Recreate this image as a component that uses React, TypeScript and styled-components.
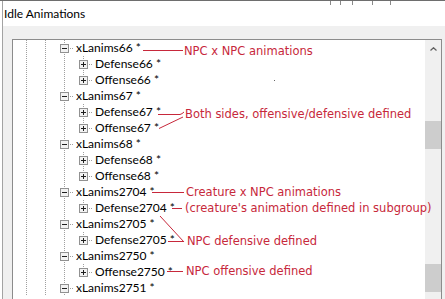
import React from 'react';
import styled, { createGlobalStyle } from 'styled-components';

const GlobalStyle = createGlobalStyle`
  html, body {
    margin: 0;
    padding: 0;
    background: #fff;
  }
  body {
    font-family: Lato, "Liberation Sans", sans-serif;
  }
`;

const Window = styled.div`
  position: relative;
  width: 445px;
  height: 299px;
  box-sizing: border-box;
  overflow: hidden;
  background: #fff;
  border-top: 1px solid #6e6e6e;
`;

const Frame = styled.div`
  height: 100%;
  margin-left: 2px;
  border-left: 1px solid #a3a3a3;
  display: flex;
  flex-direction: column;
`;

const TitleBar = styled.div`
  flex: none;
  height: 25px;
  padding-left: 1px;
  display: flex;
  align-items: center;
  font: 12px Lato, "Liberation Sans", sans-serif;
  color: #000;
  background: #fff;
`;

const Body = styled.div`
  flex: 1;
  min-height: 0;
  display: flex;
  padding: 13px 3px 0 9px;
  background: #f0f0f0;
`;

const TreeBox = styled.div`
  flex: 1;
  display: flex;
  overflow: hidden;
  border: 1px solid #8c8c8c;
  border-bottom: none;
  background: #fff;
`;

const TreeList = styled.div`
  flex: 1;
  display: flex;
  flex-direction: column;
  padding-left: 4px;
`;

const Row = styled.div`
  flex: none;
  height: 16px;
  display: flex;
`;

const DOTS_V = 'repeating-linear-gradient(to bottom, #a0a0a0 0 1px, transparent 1px 2px)';
const DOTS_H = 'repeating-linear-gradient(to right, #a0a0a0 0 1px, transparent 1px 2px)';

// tree guide lines drawn as dotted backgrounds of a 19px indent cell
const Cell = styled.span<{ $up?: boolean; $down?: boolean; $across?: boolean }>`
  flex: none;
  width: 19px;
  height: 16px;
  box-sizing: border-box;
  padding: 4px 0 0 5px;
  background: ${(p) => {
    const layers: string[] = [];
    if (p.$up && p.$down) layers.push(`${DOTS_V} 9px 0 / 1px 16px no-repeat`);
    else if (p.$up) layers.push(`${DOTS_V} 9px 0 / 1px 9px no-repeat`);
    else if (p.$down) layers.push(`${DOTS_V} 9px 8px / 1px 8px no-repeat`);
    if (p.$across) layers.push(`${DOTS_H} 9px 8px / 10px 1px no-repeat`);
    return layers.length ? layers.join(', ') : 'none';
  }};

  svg {
    display: block;
  }
`;

const Label = styled.span`
  margin-left: 2px;
  font: 12px/16px Lato, "Liberation Sans", sans-serif;
  color: #000;
  white-space: nowrap;
`;

const ScrollBar = styled.div`
  flex: none;
  width: 16px;
  display: flex;
  flex-direction: column;
  background: #f0f0f0;
`;

const ArrowButton = styled.div`
  flex: none;
  height: 17px;
  display: flex;
  align-items: center;
  justify-content: center;
`;

const Thumb = styled.div<{ $gap: number }>`
  flex: none;
  height: 28px;
  margin-top: ${(p) => p.$gap}px;
  background: #cdcdcd;
`;

const Notes = styled.div`
  position: absolute;
  inset: 0;
  pointer-events: none;
`;

const Note = styled.span<{ $x: number; $y: number }>`
  position: absolute;
  left: ${(p) => p.$x}px;
  top: ${(p) => p.$y}px;
  font: 11.5px/14px "DejaVu Sans", Verdana, sans-serif;
  color: #c7283b;
  white-space: nowrap;
`;

const Strokes = styled.svg`
  position: absolute;
  inset: 0;
`;

type Node = { depth: 0 | 1; label: string; open?: boolean; last?: boolean };

const rows: Node[] = [
  { depth: 0, label: 'xLanims66 *', open: true },
  { depth: 1, label: 'Defense66 *' },
  { depth: 1, label: 'Offense66 *', last: true },
  { depth: 0, label: 'xLanims67 *', open: true },
  { depth: 1, label: 'Defense67 *' },
  { depth: 1, label: 'Offense67 *', last: true },
  { depth: 0, label: 'xLanims68 *', open: true },
  { depth: 1, label: 'Defense68 *' },
  { depth: 1, label: 'Offense68 *', last: true },
  { depth: 0, label: 'xLanims2704 *', open: true },
  { depth: 1, label: 'Defense2704 *', last: true },
  { depth: 0, label: 'xLanims2705 *', open: true },
  { depth: 1, label: 'Defense2705 *', last: true },
  { depth: 0, label: 'xLanims2750 *', open: true },
  { depth: 1, label: 'Offense2750 *', last: true },
  { depth: 0, label: 'xLanims2751 *', open: true },
];

const notes = [
  { x: 184, y: 43, text: 'NPC x NPC animations' },
  { x: 185, y: 106, text: 'Both sides, offensive/defensive defined' },
  { x: 186, y: 184, text: 'Creature x NPC animations' },
  { x: 185, y: 200, text: "(creature's animation defined in subgroup)" },
  { x: 187, y: 233, text: 'NPC defensive defined' },
  { x: 186, y: 263, text: 'NPC offensive defined' },
];

function Expander({ open }: { open?: boolean }) {
  return (
    <svg width="9" height="9" viewBox="0 0 9 9">
      <rect x="0.5" y="0.5" width="8" height="8" fill="#f2f2f2" stroke="#919191" />
      <path d="M2 4.5h5" stroke="#1e1e1e" />
      {!open && <path d="M4.5 2v5" stroke="#1e1e1e" />}
    </svg>
  );
}

function TreeRow({ node }: { node: Node }) {
  return (
    <Row>
      <Cell $up $down />
      <Cell $up $down />
      {node.depth === 1 && <Cell $up $down />}
      <Cell $up $down={node.depth === 0 || !node.last} $across>
        <Expander open={node.depth === 0 ? node.open : false} />
      </Cell>
      <Label>{node.label}</Label>
    </Row>
  );
}

export default function App() {
  return (
    <>
      <GlobalStyle />
      <Window>
        <Frame>
          <TitleBar>Idle Animations</TitleBar>
          <Body>
            <TreeBox>
              <TreeList>
                {rows.map((n) => (
                  <TreeRow key={n.label} node={n} />
                ))}
              </TreeList>
              <ScrollBar>
                <ArrowButton>
                  <svg width="7" height="4" viewBox="0 0 7 4">
                    <path d="M0.5 3.5L3.5 0.7L6.5 3.5" fill="none" stroke="#606060" strokeWidth="1.2" />
                  </svg>
                </ArrowButton>
                <Thumb $gap={64} />
                <Thumb $gap={115} />
              </ScrollBar>
            </TreeBox>
          </Body>
        </Frame>

        <Notes>
          <Strokes width="445" height="299" viewBox="0 0 445 299">
            <g stroke="#c7283b" strokeWidth="1" fill="none">
              <path d="M143 49.5H183" />
              <path d="M158 113.5H180Q182 113 184 111" />
              <path d="M159 127.5L183 116" />
              <path d="M152 191.5H184" />
              <path d="M172 207.5H182" />
              <path d="M160 215L184 241" />
              <path d="M168 240.5H184" />
              <path d="M167 270.5H183" />
            </g>
            <g stroke="#8a8a8a" strokeWidth="1">
              <path d="M330.5 0V4M340.5 0V4M352.5 0V4M372.5 0V4M390.5 0V4" />
            </g>
            <rect x="274" y="79" width="1" height="1" fill="#666" />
          </Strokes>
          {notes.map((n) => (
            <Note key={n.text} $x={n.x} $y={n.y}>
              {n.text}
            </Note>
          ))}
        </Notes>
      </Window>
    </>
  );
}
